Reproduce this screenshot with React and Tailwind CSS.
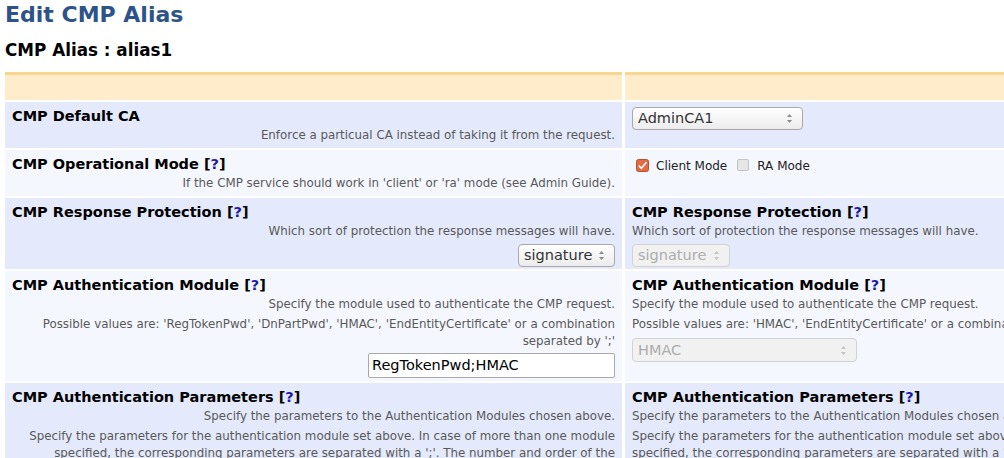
import React from "react";

const Help = () => (
  <span>
    [<span className="text-[#1b1ba8]">?</span>]
  </span>
);

const Arrows = ({ disabled }) => (
  <svg width="7" height="11" viewBox="0 0 7 11" className="shrink-0">
    <path d="M3.5 1 L6 4 L1 4 Z" fill={disabled ? "#c4c4c4" : "#8a8a8a"} />
    <path d="M3.5 10 L6 7 L1 7 Z" fill={disabled ? "#c4c4c4" : "#8a8a8a"} />
  </svg>
);

const Select = ({ value, width, height = 23, disabled }) => (
  <div
    className={
      "flex items-center justify-between rounded-[4px] border pl-[5px] pr-[9px] text-[14.5px] " +
      (disabled
        ? "border-[#d2d2d2] bg-[#f1f1f1] text-[#acacac]"
        : "border-[#a9a9a9] bg-gradient-to-b from-[#ffffff] to-[#ececec] text-[#333]")
    }
    style={{ width, height }}
  >
    <span className="leading-none">{value}</span>
    <Arrows disabled={disabled} />
  </div>
);

const Title = ({ children }) => (
  <div className="text-[14.5px] font-bold leading-[18px] text-black whitespace-nowrap">{children}</div>
);

const Desc = ({ children, className = "" }) => (
  <div className={"text-[11.85px] leading-[17px] text-[#595959] " + className}>{children}</div>
);

const blue = "bg-[#e4eafc]";
const light = "bg-[#f5f7fe]";

export default function App() {
  return (
    <div
      className="w-[1004px] h-[458px] overflow-hidden bg-white pl-[5px]"
      style={{ fontFamily: '"DejaVu Sans", Verdana, sans-serif' }}
    >
      <h1 className="h-[28px] pt-[1px] text-[22px] font-bold leading-[28px] text-[#2d5389]">Edit CMP Alias</h1>
      <h2 className="mt-[12px] text-[16.8px] font-bold leading-[20px] text-black">CMP Alias : alias1</h2>

      <div className="mt-[12px] grid w-[1240px] grid-cols-[617px_617px] grid-rows-[28px_46px_46px_71px_110px_auto] gap-x-[3px] gap-y-[2px]">
        {/* header */}
        <div className="border-t-[3px] border-[#f9d690] bg-[#feecca]" />
        <div className="border-t-[3px] border-[#f9d690] bg-[#feecca]" />

        {/* row 1 */}
        <div className={blue + " px-[7px] pt-[5px]"}>
          <Title>CMP Default CA</Title>
          <Desc className="mt-[2px] text-right">Enforce a particual CA instead of taking it from the request.</Desc>
        </div>
        <div className={blue + " px-[7px] pt-[5px]"}>
          <Select value="AdminCA1" width={171} />
        </div>

        {/* row 2 */}
        <div className={light + " px-[7px] pt-[5px]"}>
          <Title>
            CMP Operational Mode <Help />
          </Title>
          <Desc className="mt-[2px] text-right">
            If the CMP service should work in 'client' or 'ra' mode (see Admin Guide).
          </Desc>
        </div>
        <div className={light + " flex items-start pl-[11px] pt-[8px] text-[12px] leading-[15px] text-[#222]"}>
          <svg width="13" height="13" viewBox="0 0 13 13" className="mt-[1px] shrink-0">
            <rect x="0.5" y="0.5" width="12" height="12" rx="2" fill="#e36a42" stroke="#b9532f" />
            <path d="M2.8 6.6 L5.3 9.2 L10.5 3.2" stroke="#fff" strokeWidth="1.6" fill="none" />
          </svg>
          <span className="ml-[7px] mt-[1px]">Client Mode</span>
          <span className="ml-[10px] mt-[1px] h-[12px] w-[12px] shrink-0 rounded-[2px] border border-[#c2c2c2] bg-[#e6e6e6]" />
          <span className="ml-[8px] mt-[1px]">RA Mode</span>
        </div>

        {/* row 3 */}
        <div className={blue + " flex flex-col px-[7px] pt-[5px]"}>
          <Title>
            CMP Response Protection <Help />
          </Title>
          <Desc className="mt-[2px] text-right">Which sort of protection the response messages will have.</Desc>
          <div className="mt-[4px] flex justify-end">
            <Select value="signature" width={97} />
          </div>
        </div>
        <div className={blue + " flex flex-col px-[7px] pt-[5px]"}>
          <Title>
            CMP Response Protection <Help />
          </Title>
          <Desc className="mt-[2px]">Which sort of protection the response messages will have.</Desc>
          <div className="mt-[4px] flex">
            <Select value="signature" width={98} disabled />
          </div>
        </div>

        {/* row 4 */}
        <div className={light + " flex flex-col px-[7px] pt-[5px]"}>
          <Title>
            CMP Authentication Module <Help />
          </Title>
          <Desc className="mt-[2px] text-right">Specify the module used to authenticate the CMP request.</Desc>
          <Desc className="mt-[3px] text-right">
            Possible values are: 'RegTokenPwd', 'DnPartPwd', 'HMAC', 'EndEntityCertificate' or a combination
            separated by ';'
          </Desc>
          <div className="mt-[3px] flex justify-end">
            <div className="flex h-[25px] w-[247px] items-center rounded-[2px] border border-[#a9a9a9] bg-white pl-[3px] text-[14.5px] text-black">
              RegTokenPwd;HMAC
            </div>
          </div>
        </div>
        <div className={light + " flex flex-col px-[7px] pt-[5px]"}>
          <Title>
            CMP Authentication Module <Help />
          </Title>
          <Desc className="mt-[2px]">Specify the module used to authenticate the CMP request.</Desc>
          <Desc className="mt-[3px] whitespace-nowrap">
            Possible values are: 'HMAC', 'EndEntityCertificate' or a combination separated by ';'
          </Desc>
          <div className="mt-[5px] flex">
            <Select value="HMAC" width={225} height={24} disabled />
          </div>
        </div>

        {/* row 5 */}
        <div className={blue + " flex flex-col px-[7px] pt-[5px] pb-[10px]"}>
          <Title>
            CMP Authentication Parameters <Help />
          </Title>
          <Desc className="mt-[2px] text-right">Specify the parameters to the Authentication Modules chosen above.</Desc>
          <Desc className="mt-[3px] text-right">
            Specify the parameters for the authentication module set above. In case of more than one module
            specified, the corresponding parameters are separated with a ';'. The number and order of the
            parameters should match the number and order of the specified authentication modules.
          </Desc>
        </div>
        <div className={blue + " flex flex-col px-[7px] pt-[5px] pb-[10px]"}>
          <Title>
            CMP Authentication Parameters <Help />
          </Title>
          <Desc className="mt-[2px]">Specify the parameters to the Authentication Modules chosen above.</Desc>
          <Desc className="mt-[3px]">
            Specify the parameters for the authentication module set above. In case of more than one module
            specified, the corresponding parameters are separated with a ';'. The number and order of the
            parameters should match the number and order of the specified authentication modules.
          </Desc>
        </div>
      </div>
    </div>
  );
}
